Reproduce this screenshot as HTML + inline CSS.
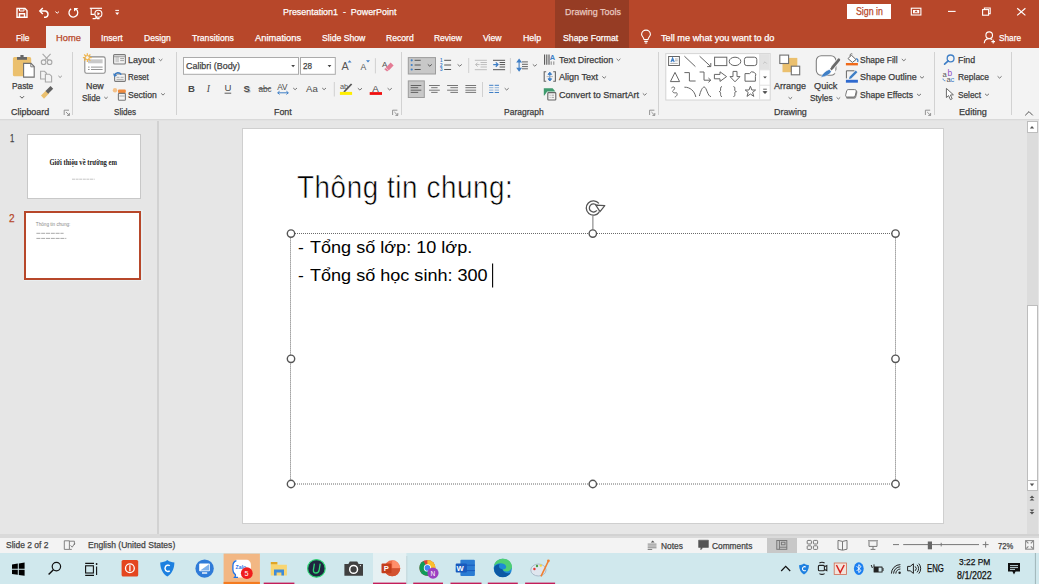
<!DOCTYPE html>
<html><head><meta charset="utf-8">
<style>
html,body{margin:0;padding:0;width:1039px;height:584px;overflow:hidden;background:#e6e6e6;font-family:"Liberation Sans",sans-serif;}
.a{position:absolute;}
.t{position:absolute;white-space:pre;line-height:1;transform-origin:0 0;font-family:"Liberation Sans",sans-serif;-webkit-text-stroke:0.25px currentColor;}
svg{position:absolute;overflow:visible;}
</style></head><body>
<!-- title bar + tabs -->
<div class="a" style="left:0;top:0;width:1039px;height:48px;background:#b7472a"></div>
<div class="a" style="left:555px;top:0;width:74px;height:48px;background:#963c24"></div>
<div class="a" style="left:46px;top:26px;width:44px;height:22px;background:#f3f3f3"></div>
<div class="a" style="left:847px;top:4px;width:44px;height:15px;background:#fff"></div>
<!-- ribbon -->
<div class="a" style="left:0;top:48px;width:1039px;height:70.6px;background:#f3f3f3"></div>
<div class="a" style="left:0;top:118.6px;width:1039px;height:1px;background:#d9d9d9"></div>
<div class="a" style="left:0;top:119.6px;width:1039px;height:1px;background:#e2e2e2"></div>
<!-- group separators -->
<div class="a" style="left:72px;top:52px;width:1px;height:63px;background:#d2d2d2"></div>
<div class="a" style="left:176px;top:52px;width:1px;height:63px;background:#d2d2d2"></div>
<div class="a" style="left:401px;top:52px;width:1px;height:63px;background:#d2d2d2"></div>
<div class="a" style="left:658px;top:52px;width:1px;height:63px;background:#d2d2d2"></div>
<div class="a" style="left:934px;top:52px;width:1px;height:63px;background:#d2d2d2"></div>
<div class="a" style="left:1011px;top:52px;width:1px;height:63px;background:#d2d2d2"></div>
<!-- workspace -->
<div class="a" style="left:157.3px;top:121px;width:1.8px;height:415px;background:#d2d2d2"></div>
<!-- thumbnails -->
<div class="a" style="left:26.5px;top:134px;width:112px;height:63px;background:#fff;border:1px solid #c8c8c8"></div>
<div class="a" style="left:23.6px;top:210.4px;width:119px;height:71px;background:#e9eef0"></div>
<div class="a" style="left:24.4px;top:211.3px;width:112.6px;height:64.3px;background:#fff;border:2.5px solid #b7472a"></div>
<!-- slide -->
<div class="a" style="left:242px;top:128px;width:700px;height:394px;background:#fff;border:1px solid #cfcfcf"></div>
<!-- scrollbar -->
<div class="a" style="left:1027px;top:121px;width:11px;height:415px;background:#dcdcdc"></div>
<div class="a" style="left:1027px;top:121px;width:9px;height:10px;background:#fff;border:1px solid #bdbdbd"></div>
<div class="a" style="left:1027px;top:305px;width:9px;height:174px;background:#fff;border:1px solid #bdbdbd"></div>
<div class="a" style="left:1027px;top:480px;width:9px;height:9px;background:#fff;border:1px solid #bdbdbd"></div>
<!-- status bar -->
<div class="a" style="left:0;top:534.4px;width:1039px;height:3.4px;background:#dadada"></div>
<div class="a" style="left:160px;top:534.2px;width:879px;height:1.8px;background:#d2d2d2"></div>
<div class="a" style="left:0;top:537.8px;width:1039px;height:15.6px;background:#f3f3f3"></div>
<div class="a" style="left:767px;top:538px;width:30px;height:15.4px;background:#c8c8c8"></div>
<!-- taskbar -->
<div class="a" style="left:0;top:553.4px;width:1039px;height:31px;background:#d0e8ed"></div>
<svg class="a" style="left:0;top:0" width="1039" height="584" viewBox="0 0 1039 584">
<!-- QAT -->
<g fill="none" stroke="#fff" stroke-width="1.4">
 <path d="M17,8.5 H25 L27,10.5 V17.3 H17 Z"/>
 <path d="M19.5,17.3 V13.8 H24.5 V17.3"/>
 <path d="M19.5,8.5 V11 H24 V8.5" stroke-width="1"/>
 <path d="M40,11 H45.5 A3.6,3.3 0 0 1 45.5,17.3 H44"/>
 <path d="M42.8,8.1 L39.8,11 L42.8,13.9"/>
 <path d="M55.4,11.6 L57.2,13.2 L59,11.6" stroke-width="1"/>
 <path d="M71.15,8.84 A4.4,4.4 0 1 0 76.2,9.28" stroke-width="1.3"/>
 <path d="M89.8,8.3 H102" stroke-width="1.2"/>
 <path d="M91.2,8.6 V14.4 H94.6" stroke-width="1.1"/>
 <circle cx="98.4" cy="13.7" r="3.5" stroke-width="1.1"/>
 <path d="M92.6,18.6 H95.2 L96.2,17.4 L97.2,18.6 H99.6" stroke-width="1.1"/>
 <path d="M115.3,10.4 H119" stroke-width="1"/>
</g>
<path d="M115.2,12.6 H119.2 L117.2,15 Z" fill="#fff"/>
<path d="M97.4,11.9 L100.2,13.7 L97.4,15.5 Z" fill="#fff"/>
<path d="M74,7.9 L78.5,7.9 L74,11.5 Z" fill="#fff"/>

<!-- window controls -->
<g fill="none" stroke="#fff" stroke-width="1.1">
 <rect x="911.3" y="8.2" width="9.6" height="6.8"/>
 <path d="M948,11.4 H955.6"/>
 <rect x="982.6" y="9.6" width="6" height="5.6"/>
 <path d="M984.4,9.6 V8 H990.2 V13.6 H988.6"/>
 <path d="M1017.2,8.2 L1025.4,15.4 M1025.4,8.2 L1017.2,15.4" stroke-width="1.2"/>
</g>
<path d="M913,10 H919.2 V13.3 H913 Z" fill="#fff"/>
<path d="M916.1,10.3 L914.4,12.2 H917.8 Z" fill="#b7472a"/>
<!-- lightbulb, share -->
<g fill="none" stroke="#fff" stroke-width="1.1">
 <path d="M644,39.5 C643.6,37 641.6,36 641.6,34.5 A4.4,4.4 0 0 1 650.4,34.5 C650.4,36 648.4,37 648,39.5 Z"/>
 <path d="M644.2,41.4 H647.8 M644.8,43 H647.2"/>
 <circle cx="989.2" cy="35.2" r="3.3"/>
 <path d="M984.2,43.2 C984.6,40 986.6,38.6 989.2,38.6 C990.4,38.6 991.4,38.9 992.2,39.5"/>
 <path d="M991.4,41.6 H995 M993.2,39.8 V43.4"/>
</g>
<!-- Clipboard group -->
<rect x="12.9" y="57.1" width="18.3" height="19.2" rx="1.6" fill="#ebc06e"/>
<path d="M17,57 H27 V59.8 H17 Z" fill="#666"/>
<path d="M20.4,55 H23.6 V57.5 H20.4 Z" fill="#666"/>
<path d="M23.6,63.4 H31 L34.2,66.6 V77.1 H23.6 Z" fill="#fff" stroke="#707070" stroke-width="1.1"/>
<path d="M30.8,63.4 V66.8 H34.2" fill="none" stroke="#707070" stroke-width="0.9"/>
<g fill="none" stroke="#a8a8a8" stroke-width="1.1">
 <circle cx="43.6" cy="62.2" r="2.3"/><circle cx="49.6" cy="62.2" r="2.3"/>
 <path d="M44.8,60.2 L50.6,53.8 M48.4,60.2 L42.6,53.8"/>
 <path d="M40.6,71.3 H44.5 L46.5,73.3 V79 H40.6 Z"/>
 <path d="M45.4,74.2 H49.5 L51.6,76.2 V82 H45.4 Z" fill="#f3f3f3"/>
 <path d="M58.4,75.9 L60.1,77.5 L61.8,75.9" stroke="#888" stroke-width="0.9"/>
</g>
<path d="M41,95.5 L46,90.5 L49,93.5 L44,98.8 Z" fill="#ebc06e"/>
<path d="M45.5,91 L50.5,86 L53.2,88.7 L48.2,93.7 Z" fill="#606060"/>
<path d="M20,96.2 L22,98.2 L24,96.2" fill="none" stroke="#555" stroke-width="1"/>
<!-- Slides group -->
<rect x="84.8" y="56.9" width="20.4" height="16.4" rx="1.8" fill="#fff" stroke="#8a8a8a" stroke-width="1.1"/>
<rect x="88" y="59.3" width="14.6" height="4" fill="#c9c9c9"/>
<path d="M88,67.1 H89.6 M91,67.1 H102.6 M88,69.5 H89.6 M91,69.5 H102.6" stroke="#888" stroke-width="0.9"/>
<g stroke="#f0b44a" stroke-width="1.2">
 <path d="M87.3,53.2 V62 M82.9,57.6 H91.7 M84.2,54.5 L90.4,60.7 M90.4,54.5 L84.2,60.7"/>
</g>
<circle cx="87.3" cy="57.6" r="2" fill="#f3f3f3" stroke="#f0b44a" stroke-width="1"/>
<path d="M104.3,97 L106,98.6 L107.7,97" fill="none" stroke="#666" stroke-width="0.9"/>
<rect x="113.6" y="54.6" width="11.8" height="9.4" rx="1" fill="#f3f3f3" stroke="#7a7a7a" stroke-width="1.1"/>
<rect x="115.4" y="56.6" width="3.6" height="5.6" fill="#cfcfcf"/>
<path d="M113.6,56.7 H125.4 M120.2,58.6 H124 M120.2,60.6 H124" stroke="#8a8a8a" stroke-width="0.8"/>
<rect x="114.6" y="74" width="10.8" height="7.4" rx="0.8" fill="#f3f3f3" stroke="#7a7a7a" stroke-width="1.1"/>
<path d="M116.5,77.3 H119.5 M120.5,77.3 H123.6 M116.5,79.4 H123.6" stroke="#999" stroke-width="0.8"/>
<path d="M114.4,75.5 C115.5,72.2 119.5,71.8 121.2,74.6" fill="none" stroke="#3b7cc4" stroke-width="1.4"/>
<path d="M113,73.2 L114.2,77 L117.2,75.4 Z" fill="#3b7cc4"/>
<circle cx="115" cy="90.2" r="2.2" fill="#f4c28a"/>
<rect x="118" y="89.6" width="7.8" height="3.4" rx="1" fill="#f08a3c"/>
<rect x="118.4" y="93.4" width="7" height="6.8" rx="0.8" fill="#f3f3f3" stroke="#7a7a7a" stroke-width="1.1"/>
<path d="M119.4,96 H124.6" stroke="#999" stroke-width="0.8"/>
<path d="M158.8,59 L160.6,60.7 L162.4,59 M161.2,93.4 L163,95.1 L164.8,93.4" fill="none" stroke="#666" stroke-width="0.9"/>
<!-- dialog launchers -->
<g fill="none" stroke="#8a8a8a" stroke-width="0.9">
 <path d="M64.2,115 V110.2 H69 M66,112 L69.4,115.4 M69.4,113 V115.4 H67"/>
 <path d="M392.6,115 V110.2 H397.4 M394.4,112 L397.8,115.4 M397.8,113 V115.4 H395.4"/>
 <path d="M649.6,115 V110.2 H654.4 M651.4,112 L654.8,115.4 M654.8,113 V115.4 H652.4"/>
 <path d="M925.4,115 V110.2 H930.2 M927.2,112 L930.6,115.4 M930.6,113 V115.4 H928.2"/>
</g>
</svg>

<svg class="a" style="left:0;top:0" width="1039" height="584" viewBox="0 0 1039 584">
<!-- Font group -->
<rect x="183.5" y="57.5" width="115" height="16.8" fill="#fff" stroke="#ababab" stroke-width="1"/>
<rect x="300.5" y="57.5" width="34.8" height="16.8" fill="#fff" stroke="#ababab" stroke-width="1"/>
<path d="M291.2,65 H295 L293.1,67.2 Z M327.6,65 H331.4 L329.5,67.2 Z" fill="#444"/>
<g font-family="Liberation Sans" fill="#555">
 <text x="341.4" y="69.8" font-size="10.8">A</text>
 <text x="360.6" y="69.8" font-size="8.6">A</text>
</g>
<path d="M347.6,62.4 L349.6,60.2 L351.6,62.4 Z" fill="#3f7fc6"/>
<path d="M366,60.2 H370 L368,62.4 Z" fill="#3f7fc6"/>
<path d="M375.4,58.2 V73.4" stroke="#d0d0d0" stroke-width="1"/>
<text x="382" y="66.6" font-family="Liberation Sans" font-size="8" fill="#555">A</text>
<path d="M385.8,67.8 L390.6,62.6 L393.6,65.4 L388.8,70.6 Z" fill="#e47b94"/>
<path d="M384,69.2 L385.8,67.8 L388.8,70.6 L387,71.6 Z" fill="#e47b94" stroke="#f3f3f3" stroke-width="0.4"/>
<g font-family="Liberation Sans" fill="#4a4a4a">
 <text x="188" y="92" font-size="9.6" font-weight="bold">B</text>
 <text x="206.8" y="92" font-size="9.6" font-style="italic" font-family="Liberation Serif">I</text>
 <text x="224.4" y="91.2" font-size="9.6">U</text>
 <text x="244.4" y="92.6" font-size="9.6" fill="#bbb" font-weight="bold">S</text>
 <text x="243.4" y="91.8" font-size="9.6" font-weight="bold">S</text>
 <text x="258.4" y="91.6" font-size="8.2">abc</text>
 <text x="277.2" y="90" font-size="8.2">AV</text>
 <text x="306" y="91.8" font-size="9.6">Aa</text>
</g>
<path d="M224.6,93.2 H231.2" stroke="#4a4a4a" stroke-width="0.9"/>
<path d="M258.4,88.6 H270.8" stroke="#4a4a4a" stroke-width="0.8"/>
<path d="M278,92.8 H288 M279.6,91.2 L277.6,92.8 L279.6,94.4 M286.4,91.2 L288.4,92.8 L286.4,94.4" fill="none" stroke="#3f7fc6" stroke-width="1"/>
<g fill="none" stroke="#666" stroke-width="0.9">
 <path d="M293.2,88 L295.1,89.7 L297,88"/>
 <path d="M322.2,88 L324.1,89.7 L326,88"/>
 <path d="M357.8,88.2 L359.9,90 L362,88.2"/>
 <path d="M387.6,88.2 L389.7,90 L391.8,88.2"/>
</g>
<path d="M334.3,82 V96.5" stroke="#d0d0d0" stroke-width="1"/>
<text x="340" y="89.4" font-family="Liberation Sans" font-size="7.4" fill="#555">ab</text>
<path d="M344,92 L351.6,84" stroke="#555" stroke-width="1.8"/>
<rect x="339.9" y="91.9" width="12.2" height="3" fill="#ffee00"/>
<text x="372.2" y="91.6" font-family="Liberation Sans" font-size="9.8" fill="#4a4a4a">A</text>
<rect x="369.7" y="92.1" width="12.3" height="2.8" fill="#f01010"/>
<!-- Paragraph group -->
<rect x="408.3" y="57.6" width="27.2" height="16.4" fill="#c8c8c8" stroke="#9c9c9c" stroke-width="1"/>
<g fill="#3f7fc6"><circle cx="411.7" cy="60.3" r="1.1"/><circle cx="411.7" cy="65" r="1.1"/><circle cx="411.7" cy="69.5" r="1.1"/></g>
<path d="M414.6,60.3 H420.7 M414.6,65 H420.7 M414.6,69.5 H420.7" stroke="#555" stroke-width="1"/>
<path d="M427.8,64.4 L429.8,66.2 L431.8,64.4" fill="none" stroke="#555" stroke-width="1"/>
<g font-family="Liberation Sans" font-size="4.6" fill="#3f7fc6" font-weight="bold">
 <text x="440" y="62">1</text><text x="440" y="66.8">2</text><text x="440" y="71.4">3</text>
</g>
<path d="M444.2,60.3 H451.1 M444.2,65 H451.1 M444.2,69.5 H451.1" stroke="#555" stroke-width="1"/>
<path d="M457.6,64.4 L459.7,66.2 L461.8,64.4" fill="none" stroke="#666" stroke-width="0.9"/>
<path d="M468.7,58 V73" stroke="#d0d0d0" stroke-width="1"/>
<g stroke="#bdbdbd" stroke-width="1" fill="none">
 <path d="M474.8,60.3 H486.9 M474.8,69.7 H486.9 M480.5,62.5 H486.9 M480.5,64.6 H486.9 M480.5,67 H486.9"/>
 <path d="M475.6,64.6 H479.6 M477.6,62.6 L475.6,64.6 L477.6,66.6"/>
</g>
<g stroke="#555" stroke-width="1" fill="none">
 <path d="M493,60.3 H505.1 M493,69.7 H505.1 M499.6,62.5 H505.1 M499.6,64.6 H505.1 M499.6,67 H505.1"/>
</g>
<path d="M493.2,64.6 H497.6 M495.8,62.4 L498,64.6 L495.8,66.8" stroke="#3f7fc6" stroke-width="1.3" fill="none"/>
<path d="M510.4,58 V73.5" stroke="#d0d0d0" stroke-width="1"/>
<path d="M519.1,60.2 V70 M517.2,62 L519.1,59.4 L521,62 Z M517.2,68.2 L519.1,70.8 L521,68.2 Z" stroke="#3f7fc6" stroke-width="1.1" fill="#3f7fc6"/>
<path d="M522,61.9 H527.9 M522,64.3 H527.9 M522,66.6 H527.9 M522,68.8 H527.9" stroke="#555" stroke-width="0.9"/>
<path d="M532.8,64.4 L534.8,66.2 L536.8,64.4" fill="none" stroke="#666" stroke-width="0.9"/>
<rect x="408.3" y="80.9" width="16" height="16.6" fill="#c8c8c8" stroke="#9c9c9c" stroke-width="1"/>
<path d="M410.7,85.5 H421.3 M410.7,87.7 H418.2 M410.7,90.2 H421.3 M410.7,92.4 H418.2" stroke="#555" stroke-width="0.9"/>
<path d="M429,85.5 H439.8 M431.2,87.7 H437.6 M429,90.2 H439.8 M431.2,92.4 H437.6" stroke="#666" stroke-width="0.9"/>
<path d="M447.1,85.5 H458 M450.4,87.7 H458 M447.1,90.2 H458 M450.4,92.4 H458" stroke="#666" stroke-width="0.9"/>
<path d="M465.4,85.5 H476.1 M465.4,87.7 H476.1 M465.4,90.2 H476.1 M465.4,92.4 H476.1" stroke="#666" stroke-width="0.9"/>
<path d="M482.5,82 V97" stroke="#d0d0d0" stroke-width="1"/>
<path d="M489.1,85.3 H493.4 M494.7,85.3 H499 M489.1,92.5 H493.4 M494.7,92.5 H499" stroke="#3f7fc6" stroke-width="1"/>
<path d="M489.1,87.7 H493.4 M494.7,87.7 H499 M489.1,90.1 H493.4 M494.7,90.1 H499" stroke="#8fb3da" stroke-width="1"/>
<path d="M504.7,88.2 L506.7,90 L508.7,88.2" fill="none" stroke="#666" stroke-width="0.9"/>
<!-- Text direction -->
<path d="M544.6,54.5 V64.8 M546.8,54.5 V64.8 M549,54.5 V64.8" stroke="#555" stroke-width="1.1"/>
<path d="M551.2,61.4 V64.8 M553.8,61.4 V64.8" stroke="#888" stroke-width="1"/>
<text x="549.8" y="60" font-family="Liberation Sans" font-size="7.4" font-weight="bold" fill="#3f7fc6">A</text>
<path d="M616.6,58.8 L618.5,60.6 L620.4,58.8" fill="none" stroke="#666" stroke-width="0.9"/>
<!-- Align text -->
<path d="M546.2,71.8 H544.2 V81.3 H546.2 M553.2,71.8 H555.4 V81.3 H553.2" fill="none" stroke="#666" stroke-width="1.1"/>
<path d="M549.8,72.6 V80.6 M548,74.4 L549.8,72.2 L551.6,74.4 Z M548,78.8 L549.8,81 L551.6,78.8 Z" stroke="#3f7fc6" stroke-width="1" fill="#3f7fc6"/>
<path d="M546.6,76.6 H553" stroke="#aaa" stroke-width="0.8"/>
<path d="M602.3,76.4 L604.2,78.2 L606.1,76.4" fill="none" stroke="#666" stroke-width="0.9"/>
<!-- SmartArt -->
<path d="M543.8,88.2 H552.6 L555.4,91.6 H547.2 L544.4,95.6 H543.8 Z" fill="#3f9b6e"/>
<rect x="547.8" y="92.6" width="8" height="7.4" rx="0.8" fill="#f3f3f3" stroke="#666" stroke-width="1.1"/>
<path d="M549.6,95.2 H550.6 M551.6,95.2 H554 M549.6,97.4 H550.6 M551.6,97.4 H554" stroke="#888" stroke-width="0.7"/>
<path d="M642.8,93.4 L644.7,95.2 L646.6,93.4" fill="none" stroke="#666" stroke-width="0.9"/>
</svg>

<svg class="a" style="left:0;top:0" width="1039" height="584" viewBox="0 0 1039 584">
<!-- shapes gallery -->
<rect x="665.8" y="53.6" width="104.4" height="46.4" fill="#fff" stroke="#d4d4d4" stroke-width="1"/>
<rect x="759.8" y="54.1" width="9.9" height="15.4" fill="#e2e2e2"/>
<path d="M759.6,54 V99.5 M759.6,69.8 H770 M759.6,85.2 H770" stroke="#e0e0e0" stroke-width="1"/>
<path d="M763.2,63.6 L765,61.8 L766.8,63.6" fill="none" stroke="#c0c0c0" stroke-width="0.9"/>
<path d="M763.2,76.6 H766.8 L765,78.6 Z" fill="#444"/>
<path d="M763.2,89.2 H766.8 M763.2,91.6 H766.8 L765,93.6 Z" stroke="#444" stroke-width="0.8" fill="#444"/>
<g fill="none" stroke="#666" stroke-width="1">
 <rect x="668.6" y="56.5" width="10.8" height="9"/>
 <path d="M670.2,63.4 H677.8 M675,59 H677.8 M675,60.8 H677.8" stroke="#999" stroke-width="0.8"/>
 <path d="M684.4,56.2 L695.4,66.6"/>
 <path d="M699.6,56.2 L710.6,66.4 M707.2,66.6 H710.8 V63"/>
 <rect x="714.6" y="57.2" width="12.2" height="8.4"/>
 <ellipse cx="735" cy="61.4" rx="5.8" ry="4.2"/>
 <rect x="744.4" y="57.2" width="12.4" height="8.4" rx="2.4"/>
 <path d="M675,72.4 L679.6,81.6 H670.4 Z"/>
 <path d="M684.4,72.6 H689.4 V81 H695.6"/>
 <path d="M699.6,72 H704 V80.2 H710.6 M708.4,78 L710.8,80.2 L708.4,82.4"/>
 <path d="M714.4,74.4 H720 V71.8 L726.6,76.6 L720,81.4 V78.8 H714.4 Z"/>
 <path d="M733,71.4 H737 V76.6 H740 L735,81.8 L730,76.6 H733 Z"/>
 <path d="M745,73.6 H749.6 A3,3 0 0 1 755.4,76.6 V81.2 H745 Z"/>
 <path d="M671.4,88 C674,85.6 676,88 673.6,90 C671,92 674.4,93.6 676.4,92.6 C678,94 676.8,96.4 674.8,97"/>
 <path d="M684.4,87.2 C690,87 694.6,91 695.8,97"/>
 <path d="M699.4,96 C700.6,91 702.4,87 704.2,87 C706.6,87 707.6,96.6 711,96.6"/>
 <path d="M722,86.6 C720.2,86.6 720.6,88.6 720.6,90 C720.6,91.2 719.8,91.6 719,91.6 C719.8,91.6 720.6,92 720.6,93.2 C720.6,94.6 720.2,96.6 722,96.6"/>
 <path d="M733.4,86.6 C735.2,86.6 734.8,88.6 734.8,90 C734.8,91.2 735.6,91.6 736.4,91.6 C735.6,91.6 734.8,92 734.8,93.2 C734.8,94.6 735.2,96.6 733.4,96.6"/>
 <path d="M750.4,86.2 L751.8,90 H755.6 L752.6,92.4 L753.8,96.4 L750.4,94 L747,96.4 L748.2,92.4 L745.2,90 H749 Z"/>
</g>
<path d="M671,62 L672.6,58 L674.2,62 M671.6,60.6 H673.6" fill="none" stroke="#3f7fc6" stroke-width="1.2"/>
<!-- Arrange -->
<rect x="782.5" y="57.9" width="14.8" height="14.3" fill="#ebc06e"/>
<rect x="779.8" y="55.1" width="8.8" height="8.4" fill="#fff" stroke="#707070" stroke-width="1.1"/>
<rect x="791.3" y="66.2" width="8.4" height="8.6" fill="#fff" stroke="#707070" stroke-width="1.1"/>
<path d="M788.5,97.2 L790.3,98.8 L792.1,97.2" fill="none" stroke="#666" stroke-width="0.9"/>
<!-- Quick styles -->
<rect x="816.3" y="55.7" width="19.6" height="19.6" rx="5" fill="#fff" stroke="#808080" stroke-width="1.1"/>
<path d="M833.5,73 L837,69.5 L838,74 Z" fill="#f3f3f3"/>
<path d="M839,59.6 L832.4,67.6" stroke="#f3f3f3" stroke-width="4.6"/>
<path d="M838.8,59.8 L832.6,67.4" stroke="#6a6a6a" stroke-width="2.8" stroke-linecap="round"/>
<path d="M831.8,67 L833.4,68.6 L831.6,70.4 L830,68.8 Z" fill="#6a6a6a"/>
<path d="M829.4,69.4 L831.2,71.4 C830,74 827,76.4 820.8,77.2 C822.6,73.6 825.6,70.6 829.4,69.4 Z" fill="#3f7fc6" stroke="#f3f3f3" stroke-width="0.5"/>
<path d="M836.6,97.4 L838.4,99 L840.2,97.4" fill="none" stroke="#666" stroke-width="0.9"/>
<!-- Shape fill / outline / effects -->
<path d="M848,58.6 L851.4,55.2 L856,59.6 L852.4,62.4 Z" fill="#fff" stroke="#666" stroke-width="1"/>
<path d="M850.2,56.4 C849.6,54.4 851,53 852.4,54" fill="none" stroke="#666" stroke-width="0.9"/>
<path d="M856,59 C857.6,58.6 858.4,60.6 857.6,62" fill="none" stroke="#3f7fc6" stroke-width="1.3"/>
<rect x="845.9" y="63" width="12" height="2.4" fill="#f06a1a"/>
<path d="M846.4,78.4 V70.8 H854.4" fill="none" stroke="#666" stroke-width="1"/>
<path d="M849.6,76.8 L855.8,70.6 L857.4,72.2 L851.2,78.4 L849,79 Z" fill="#3f7fc6"/>
<rect x="845.9" y="79.8" width="12" height="2.9" fill="#2f6acf"/>
<path d="M848.6,90.2 H855.4 C857.2,90.2 857.6,91.4 857.2,93.2 L856.4,96.4 C856,98 855,98.8 853.4,98.8 H848 C846.4,98.8 845.8,97.8 846.2,96.2 L847,92.6 C847.4,91 847.8,90.2 848.6,90.2 Z" fill="#8c8c8c"/>
<path d="M848.2,89.6 H854.6 C856,89.6 856.4,90.6 856.1,92 L855.4,95 C855.1,96.4 854.2,97 852.8,97 H847.2 C845.9,97 845.4,96.2 845.7,94.8 L846.4,92 C846.7,90.4 847.2,89.6 848.2,89.6 Z" fill="#fff" stroke="#6a6a6a" stroke-width="0.9"/>
<g fill="none" stroke="#666" stroke-width="0.9">
 <path d="M901.8,59 L903.8,60.8 L905.8,59"/>
 <path d="M920,76.4 L922,78.2 L924,76.4"/>
 <path d="M917,93.9 L919,95.7 L921,93.9"/>
 <path d="M997.6,76.3 L999.6,78.1 L1001.6,76.3"/>
 <path d="M985,93.8 L987,95.6 L989,93.8"/>
 <path d="M1025.2,115.4 L1029,111.6 L1032.8,115.4" stroke="#555" stroke-width="1"/>
</g>
<!-- Editing -->
<circle cx="950.6" cy="58.4" r="3.4" fill="none" stroke="#3f7fc6" stroke-width="1.3"/>
<path d="M948.2,60.9 L944.6,64.2" stroke="#3f7fc6" stroke-width="1.7" stroke-linecap="round"/>
<text x="942.6" y="76.6" font-family="Liberation Sans" font-size="7.6" fill="#555">a</text>
<text x="947.4" y="76.4" font-family="Liberation Sans" font-size="8.4" fill="#8e4fc4">b</text>
<text x="946.4" y="82" font-family="Liberation Sans" font-size="7.6" fill="#555">a</text>
<text x="950.6" y="82" font-family="Liberation Sans" font-size="7.6" fill="#3f7fc6">c</text>
<path d="M943,78.6 C943.2,80 943.8,80.6 945.4,80.8" fill="none" stroke="#3f7fc6" stroke-width="0.9"/>
<path d="M946.4,88.4 V97.6 L948.6,95.6 L950.4,99.6 L952.2,98.8 L950.4,95 L953.4,94.8 Z" fill="#fff" stroke="#6a6a6a" stroke-width="1" stroke-linejoin="round"/>
</svg>

<svg class="a" style="left:0;top:0" width="1039" height="584" viewBox="0 0 1039 584">
<!-- text box selection -->
<g fill="none" stroke="#6a6a6a" stroke-width="1" stroke-dasharray="1 1">
 <path d="M291,233.5 H895.5 M291,484 H895.5"/>
 <path d="M290.5,233.6 V484 M895.5,233.6 V484"/>
</g>
<path d="M592.9,215.6 V229.6" stroke="#777" stroke-width="1"/>
<g fill="#fff" stroke="#555" stroke-width="1.4">
 <circle cx="291" cy="233.6" r="3.7"/>
 <circle cx="592.8" cy="233.6" r="3.7"/>
 <circle cx="895.5" cy="233.6" r="3.7"/>
 <circle cx="291" cy="358.8" r="3.7"/>
 <circle cx="895.5" cy="358.8" r="3.7"/>
 <circle cx="291" cy="484" r="3.7"/>
 <circle cx="592.8" cy="484" r="3.7"/>
 <circle cx="895.5" cy="484" r="3.7"/>
</g>
<!-- rotation handle -->
<path d="M598,211.2 A5.6,5.6 0 1 1 597.7,204.4" fill="none" stroke="#555" stroke-width="4.4"/>
<path d="M598,211.2 A5.6,5.6 0 1 1 597.7,204.4" fill="none" stroke="#fff" stroke-width="1.8"/>
<path d="M595.8,205.2 L604.8,205.6 L600,211.6 Z" fill="#fff" stroke="#555" stroke-width="1.2" stroke-linejoin="round"/>
<!-- text cursor -->
<path d="M492.6,263.6 V287.6" stroke="#000" stroke-width="1.1"/>
</svg>

<svg class="a" style="left:0;top:0" width="1039" height="584" viewBox="0 0 1039 584">
<!-- thumbnails content -->
<text x="49.4" y="165.2" font-family="Liberation Serif" font-size="8" font-weight="bold" fill="#222" textLength="67.5" lengthAdjust="spacingAndGlyphs">Giới thiệu về trường em</text>
<path d="M72,179.2 H94.7" stroke="#c4c4c4" stroke-width="1" stroke-dasharray="3 0.6"/>
<text x="35.8" y="225.6" font-family="Liberation Sans" font-size="5.6" fill="#888" textLength="34.6" lengthAdjust="spacingAndGlyphs">Thông tin chung:</text>
<path d="M36.4,233.3 H63.6 M36.4,238.4 H66.3" stroke="#a8a8a8" stroke-width="1" stroke-dasharray="4 0.8"/>
<!-- status bar icons -->
<path d="M64.3,540.8 H69.4 V549.4 H64.3 Z" fill="none" stroke="#777" stroke-width="0.9"/>
<path d="M69.4,541.2 H74.4 V545 M69.4,549.4 H71.8" fill="none" stroke="#777" stroke-width="0.9"/>
<path d="M70.6,545.4 L72.2,547.2 L75,543" fill="none" stroke="#777" stroke-width="0.9"/>
<path d="M650.8,542.6 L652.7,540.6 L654.6,542.6 Z" fill="#555"/>
<path d="M647.7,544.1 H656.5 M647.7,546 H656.5 M647.7,547.8 H656.5 M647.7,549.5 H652.2" stroke="#777" stroke-width="0.9"/>
<path d="M698.6,540.2 H708.4 V547.4 H702.8 L700.8,549.8 V547.4 H698.6 Z" fill="#555" stroke="#555" stroke-width="0.6" stroke-linejoin="round"/>
<g fill="none" stroke="#777" stroke-width="1">
 <rect x="776.8" y="540.5" width="10" height="8.8"/>
 <path d="M779.4,540.5 V549.3 M779.4,547.2 H786.8"/>
 <rect x="781.4" y="542.2" width="3.6" height="2.6"/>
 <rect x="807.2" y="540.4" width="4.2" height="3.6" rx="0.8"/>
 <rect x="813.4" y="540.4" width="4.2" height="3.6" rx="0.8"/>
 <rect x="807.2" y="545.8" width="4.2" height="3.6" rx="0.8"/>
 <rect x="813.4" y="545.8" width="4.2" height="3.6" rx="0.8"/>
 <path d="M842.5,541.4 L838,540.4 V549.2 L842.5,550.2 L847,549.2 V540.4 Z M842.5,541.4 V550"/>
 <path d="M868,540.8 H878 M869,541.4 V546.4 H877 V541.4 M873,546.4 V549 M870.6,549.4 H875.4"/>
 <path d="M893,544.6 H899"/>
 <path d="M903.2,544.6 H979 M941.2,542.8 V546.4 M982.7,544.6 H988.6 M985.65,541.6 V547.6"/>
</g>
<rect x="927.8" y="541.5" width="4.2" height="7.8" fill="#666"/>
<g fill="none" stroke="#888" stroke-width="1">
 <rect x="1025.6" y="540.6" width="8" height="8.6"/>
</g>
<path d="M1026.2,541.2 L1028.4,543.4 M1033,541.2 L1030.8,543.4 M1026.2,548.6 L1028.4,546.4 M1033,548.6 L1030.8,546.4" stroke="#888" stroke-width="1.2"/>
<!-- scrollbar glyphs -->
<path d="M1029.8,128.6 L1032,126 L1034.2,128.6 Z" fill="#555"/>
<path d="M1029.8,483.6 H1034.2 L1032,486.2 Z" fill="#555"/>
<path d="M1029.6,498 L1032,495.6 L1034.4,498 Z M1029.6,500.6 L1032,498.2 L1034.4,500.6 Z" fill="#555"/>
<path d="M1029.6,509.4 H1034.4 L1032,511.8 Z M1029.6,512 H1034.4 L1032,514.4 Z" fill="#555"/>
</svg>

<svg class="a" style="left:0;top:0" width="1039" height="584" viewBox="0 0 1039 584">
<!-- start, search, task view -->
<path d="M12,564.4 L17.8,563.6 V568.7 H12 Z M18.8,563.4 L24.6,562.6 V568.7 H18.8 Z M12,569.7 H17.8 V574.8 L12,574 Z M18.8,569.7 H24.6 V575.8 L18.8,575 Z" fill="#000"/>
<circle cx="56.4" cy="566.6" r="4.2" fill="none" stroke="#111" stroke-width="1.2"/>
<path d="M53.4,569.8 L48.6,574.6" stroke="#111" stroke-width="1.4"/>
<g fill="none" stroke="#111" stroke-width="1.1">
 <path d="M85.2,563.4 H94 M85.2,575.4 H94"/>
 <rect x="85.6" y="565.8" width="7.8" height="7.2"/>
 <path d="M96.6,566.6 V575"/>
</g>
<circle cx="96.6" cy="564" r="0.9" fill="#111"/>
<!-- red power -->
<rect x="121.6" y="560" width="16.6" height="16.6" rx="1.6" fill="#e4461f"/>
<circle cx="129.9" cy="568.3" r="4.4" fill="none" stroke="#fff" stroke-width="1.3"/>
<path d="M129.9,565.2 V571.2" stroke="#fff" stroke-width="1.3"/>
<!-- shield -->
<path d="M167.3,560 C165,561.8 162.6,562.4 160.2,562.4 C160.4,569 163,574 167.3,576.6 C171.6,574 174.2,569 174.4,562.4 C172,562.4 169.6,561.8 167.3,560 Z" fill="#1d80e0"/>
<path d="M169.6,566 C169,564.6 165.2,564.6 165,568.4 C165.2,572 169,572 169.6,570.6" fill="none" stroke="#fff" stroke-width="1.4"/>
<!-- blue circle app -->
<circle cx="204.6" cy="568.6" r="9.2" fill="#2f7bd8"/>
<rect x="199.2" y="563.6" width="10.6" height="7.6" rx="0.8" fill="#fff"/>
<path d="M200.2,570.6 L209,564.2 V570.6 Z" fill="#7fb2ec"/>
<path d="M202,573 H207.2" stroke="#fff" stroke-width="1.4"/>
<!-- zalo active -->
<rect x="223.6" y="553.6" width="36.3" height="30.4" fill="#f2b784"/>
<rect x="223.6" y="581.9" width="36.3" height="2.1" fill="#f47b20"/>
<path d="M238,559.8 H246 C249,559.8 250.9,561.8 250.9,565 V571 C250.9,575 248.6,577.4 245,577.4 H234.6 C235.6,576.4 235.8,575.6 235.4,574.6 C233.8,573.6 232.9,572 232.9,570 V565 C232.9,561.8 234.8,559.8 238,559.8 Z" fill="#fff"/>
<path d="M236.4,560.6 C233.8,561.4 232.9,563.2 232.9,566 V570 C232.9,572 233.8,573.6 235.4,574.6 C235.8,575.6 235.6,576.4 234.6,577.4 H238" fill="none" stroke="#1f73e8" stroke-width="1.3"/>
<text x="235.6" y="568.6" font-family="Liberation Sans" font-size="5.2" font-weight="bold" fill="#1f73e8">Zalo</text>
<circle cx="246.8" cy="573.2" r="5.9" fill="#f01d1d"/>
<text x="244.6" y="575.9" font-family="Liberation Sans" font-size="7.2" fill="#fff">5</text>
<!-- explorer -->
<path d="M270.8,563.6 H276.6 L277.8,564.8 H286.9 V575.5 H270.8 Z" fill="#f8d571"/>
<rect x="270.8" y="562" width="6.6" height="2.2" fill="#e0a526"/>
<path d="M274,569.4 H284 V575.5 H281.4 V572.4 H276.6 V575.5 H274 Z" fill="#3e8bd8"/>
<rect x="263.7" y="582.6" width="30.7" height="1.4" fill="#c41e5a"/>
<!-- U app -->
<circle cx="316.4" cy="568.4" r="8.8" fill="#1f2540" stroke="#2ed573" stroke-width="1.2"/>
<path d="M314.4,563.6 L313.4,569.8 C313.2,572 314.2,573 316,573 C317.8,573 318.8,572 319.2,569.8 L320.2,563.6" fill="none" stroke="#2ed573" stroke-width="1.3"/>
<!-- camera -->
<path d="M344.4,564 H348.4 L349.8,561.6 H357.2 L358.6,564 H363 V575.8 H344.4 Z" fill="#404040"/>
<circle cx="353.6" cy="569.4" r="3.9" fill="#404040" stroke="#fff" stroke-width="1.5"/>
<circle cx="360.4" cy="565.6" r="0.6" fill="#fff"/>
<!-- powerpoint active -->
<rect x="373" y="553" width="33.4" height="31" fill="#e6f1f3"/>
<rect x="373" y="582.6" width="33.4" height="1.4" fill="#c41e5a"/>
<path d="M406.8,556 V584" stroke="#bcd2d6" stroke-width="0.8"/>
<circle cx="392.2" cy="568.3" r="8" fill="#ed6c47"/>
<path d="M392.2,560.3 A8,8 0 0 1 400.2,568.3 H392.2 Z" fill="#ff8f6b"/>
<path d="M384.2,568.3 A8,8 0 0 0 400.2,568.3 Z" fill="#d35230"/>
<rect x="381.5" y="563.6" width="10" height="9.7" rx="1" fill="#c43e1c"/>
<text x="383.8" y="571.4" font-family="Liberation Sans" font-size="7.6" font-weight="bold" fill="#fff">P</text>
<!-- chrome + N -->
<circle cx="427.4" cy="567.9" r="8" fill="#db4437"/>
<path d="M427.4,567.9 L434.3,571.9 A8,8 0 0 1 420.5,571.9 Z" fill="#0f9d58"/>
<path d="M427.4,567.9 L420.5,571.9 A8,8 0 0 1 419.4,567.9 A8,8 0 0 1 423.4,561 Z" fill="#0f9d58"/>
<path d="M427.4,567.9 L434.3,571.9 A8,8 0 0 0 435.4,567.9 A8,8 0 0 0 427.4,559.9 V567.9 Z" fill="#fbc02d"/>
<circle cx="427.4" cy="567.9" r="3.6" fill="#fff"/>
<circle cx="427.4" cy="567.9" r="2.8" fill="#4285f4"/>
<circle cx="433" cy="573.1" r="5.6" fill="#9b3fc1"/>
<text x="430.6" y="575.8" font-family="Liberation Sans" font-size="6.6" fill="#fff">N</text>
<rect x="413.2" y="582.6" width="29.8" height="1.4" fill="#c41e5a"/>
<!-- word -->
<rect x="460.4" y="559.7" width="14.5" height="16.4" rx="1" fill="#2b7cd3"/>
<path d="M460.4,565.2 H474.9 M460.4,570.6 H474.9" stroke="#185abd" stroke-width="1"/>
<rect x="455.7" y="563.4" width="11.2" height="9.2" rx="1" fill="#185abd"/>
<text x="456.6" y="571.2" font-family="Liberation Sans" font-size="7.6" font-weight="bold" fill="#fff">W</text>
<rect x="450.5" y="582.6" width="31" height="1.4" fill="#c41e5a"/>
<!-- edge -->
<circle cx="502.8" cy="567.9" r="9.2" fill="#1e8ad6"/>
<path d="M494,566 C495,560 500,558.7 503.4,558.7 C508.6,558.7 512,562.6 512,566.6 C512,569.6 509.6,571.4 506.6,571.4 C504.6,571.4 503,570.6 502.6,569.4 C505.6,569.4 506.6,567.6 506,566 C505,563.6 501.4,562.6 498.4,563.6 C496.4,564.2 494.8,565.4 494,566 Z" fill="#4fcf74"/>
<path d="M502.4,569.2 C503.6,572.6 507.4,574 511,572.6 C509.4,575.6 506.4,577.2 502.8,577.2 C497,577.2 494,572.6 494,568 C494.6,565.6 497,564 499.8,564.2 C498,566 499,568.6 502.4,569.2 Z" fill="#0c59a4"/>
<rect x="487.8" y="582.6" width="30" height="1.4" fill="#c41e5a"/>
<!-- paint -->
<ellipse cx="538.4" cy="570" rx="7.6" ry="6" fill="#dfe6ee" stroke="#9fb0c0" stroke-width="0.8"/>
<circle cx="534.4" cy="569" r="1.2" fill="#e53935"/>
<circle cx="537" cy="566" r="1.2" fill="#43a047"/>
<circle cx="540.8" cy="565.6" r="1.2" fill="#fdd835"/>
<path d="M541,576.4 L548.4,561" stroke="#f08030" stroke-width="1.6"/>
<circle cx="548.4" cy="560.8" r="1.4" fill="#f08030"/>
<rect x="525.1" y="582.6" width="30" height="1.4" fill="#c41e5a"/>
<!-- tray -->
<path d="M781.2,571 L785.7,566.4 L790.2,571" fill="none" stroke="#111" stroke-width="1.2"/>
<path d="M804,563.6 C802.4,564.8 800.6,565.2 799,565.2 C799.2,569.6 801,572.8 804,574.4 C807,572.8 808.8,569.6 809,565.2 C807.4,565.2 805.6,564.8 804,563.6 Z" fill="#1d80e0"/>
<path d="M805.6,567.2 C805,566.2 802.6,566.4 802.4,568.8 C802.6,571 805,571.2 805.6,570.2" fill="none" stroke="#fff" stroke-width="1.1"/>
<g fill="none" stroke="#222" stroke-width="1.1">
 <rect x="818.4" y="565.4" width="6" height="5.4" rx="1"/>
 <path d="M824.4,566.8 L826.8,565.6 V570.6 L824.4,569.4"/>
 <path d="M819.4,563 C821,562 823,562 824.6,563 M819.4,573.6 C821,574.6 823,574.6 824.6,573.6"/>
</g>
<rect x="834.2" y="563" width="12.2" height="11.4" fill="#f3e4dc" stroke="#d26a4e" stroke-width="0.8"/>
<path d="M836.4,565 L840.2,572.6 L844.2,565" fill="none" stroke="#d8231f" stroke-width="1.5"/>
<ellipse cx="858.8" cy="568.6" rx="4.9" ry="6.3" fill="#1b7ff0"/>
<path d="M856.6,566.2 L861,570.6 L858.8,572.6 V564.6 L861,566.6 L856.6,571" fill="none" stroke="#fff" stroke-width="0.9"/>
<g fill="#222">
 <rect x="873.6" y="566.4" width="9" height="6.2" rx="0.6"/>
</g>
<path d="M871.2,565 L872.4,568 M874,564.4 V567" stroke="#222" stroke-width="1"/>
<rect x="882.6" y="568" width="0.9" height="3" fill="#222"/>
<rect x="878.6" y="567.6" width="3" height="4" fill="#d0e8ed"/>
<g fill="none" stroke="#222" stroke-width="1">
 <path d="M891.4,573.6 A9,9 0 0 1 900.4,564.6"/>
 <path d="M893.6,573.6 A6.8,6.8 0 0 1 900.4,566.8"/>
 <path d="M895.8,573.6 A4.6,4.6 0 0 1 900.4,569"/>
</g>
<circle cx="899.6" cy="572.8" r="1.2" fill="#222"/>
<path d="M907.6,566.4 H910.2 L913.4,563.8 V573.4 L910.2,570.8 H907.6 Z" fill="none" stroke="#222" stroke-width="1"/>
<path d="M915.2,566.4 A3,3 0 0 1 915.2,570.8 M917,564.8 A5.4,5.4 0 0 1 917,572.4 M918.8,563.6 A7.6,7.6 0 0 1 918.8,573.6" fill="none" stroke="#222" stroke-width="1"/>
<path d="M1008,563 H1020 V571.4 H1015.6 L1014,574.4 L1012.4,571.4 H1008 Z" fill="#111"/>
<path d="M1010,565.6 H1018 M1010,567.6 H1018 M1010,569.4 H1015" stroke="#d0e8ed" stroke-width="0.9"/>
<path d="M1035.4,553 V584" stroke="#9fb4b8" stroke-width="1"/>
</svg>

<div class="t" style="left:283.20px;top:7.33px;font-size:9.88px;color:#fff;transform:scaleX(0.9021);">Presentation1  -  PowerPoint</div>
<div class="t" style="left:564.50px;top:7.33px;font-size:9.88px;color:#e9c9c0;transform:scaleX(0.9038);">Drawing Tools</div>
<div class="t" style="left:856.00px;top:7.39px;font-size:10.17px;color:#b7472a;transform:scaleX(0.8632);">Sign in</div>
<div class="t" style="left:15.50px;top:33.40px;font-size:9.45px;color:#fff;transform:scaleX(0.8780);">File</div>
<div class="t" style="left:55.70px;top:33.40px;font-size:9.45px;color:#b7472a;transform:scaleX(0.9871);">Home</div>
<div class="t" style="left:101.20px;top:33.40px;font-size:9.45px;color:#fff;transform:scaleX(0.9217);">Insert</div>
<div class="t" style="left:143.90px;top:33.40px;font-size:9.45px;color:#fff;transform:scaleX(0.9105);">Design</div>
<div class="t" style="left:192.00px;top:33.40px;font-size:9.45px;color:#fff;transform:scaleX(0.9138);">Transitions</div>
<div class="t" style="left:254.80px;top:33.40px;font-size:9.45px;color:#fff;transform:scaleX(0.9866);">Animations</div>
<div class="t" style="left:321.60px;top:33.40px;font-size:9.45px;color:#fff;transform:scaleX(0.9183);">Slide Show</div>
<div class="t" style="left:385.70px;top:33.40px;font-size:9.45px;color:#fff;transform:scaleX(0.9121);">Record</div>
<div class="t" style="left:434.40px;top:33.40px;font-size:9.45px;color:#fff;transform:scaleX(0.8969);">Review</div>
<div class="t" style="left:483.10px;top:33.40px;font-size:9.45px;color:#fff;transform:scaleX(0.9145);">View</div>
<div class="t" style="left:523.00px;top:33.40px;font-size:9.45px;color:#fff;transform:scaleX(0.9351);">Help</div>
<div class="t" style="left:563.40px;top:33.40px;font-size:9.45px;color:#fff;transform:scaleX(0.9239);">Shape Format</div>
<div class="t" style="left:661.40px;top:33.40px;font-size:9.45px;color:#fff;transform:scaleX(0.9742);">Tell me what you want to do</div>
<div class="t" style="left:998.80px;top:33.20px;font-size:9.45px;color:#fff;transform:scaleX(0.8719);">Share</div>
<div class="t" style="left:11.70px;top:81.75px;font-size:9.16px;color:#3b3b3b;transform:scaleX(0.9069);">Paste</div>
<div class="t" style="left:86.00px;top:81.55px;font-size:9.16px;color:#3b3b3b;transform:scaleX(0.9680);">New</div>
<div class="t" style="left:81.70px;top:93.65px;font-size:9.16px;color:#3b3b3b;transform:scaleX(0.9002);">Slide</div>
<div class="t" style="left:128.00px;top:56.05px;font-size:9.16px;color:#3b3b3b;transform:scaleX(0.9760);">Layout</div>
<div class="t" style="left:128.00px;top:73.45px;font-size:9.16px;color:#3b3b3b;transform:scaleX(0.8670);">Reset</div>
<div class="t" style="left:128.00px;top:90.65px;font-size:9.16px;color:#3b3b3b;transform:scaleX(0.9409);">Section</div>
<div class="t" style="left:10.90px;top:108.15px;font-size:9.16px;color:#3b3b3b;transform:scaleX(0.9755);">Clipboard</div>
<div class="t" style="left:113.80px;top:108.15px;font-size:9.16px;color:#3b3b3b;transform:scaleX(0.8833);">Slides</div>
<div class="t" style="left:185.90px;top:62.05px;font-size:9.16px;color:#444;transform:scaleX(0.9743);">Calibri (Body)</div>
<div class="t" style="left:302.90px;top:62.05px;font-size:9.16px;color:#444;transform:scaleX(0.8875);">28</div>
<div class="t" style="left:273.60px;top:108.15px;font-size:9.16px;color:#3b3b3b;transform:scaleX(0.9680);">Font</div>
<div class="t" style="left:503.60px;top:108.15px;font-size:9.16px;color:#3b3b3b;transform:scaleX(0.9269);">Paragraph</div>
<div class="t" style="left:558.60px;top:56.05px;font-size:9.16px;color:#3b3b3b;transform:scaleX(0.9761);">Text Direction</div>
<div class="t" style="left:558.60px;top:73.45px;font-size:9.16px;color:#3b3b3b;transform:scaleX(0.9901);">Align Text</div>
<div class="t" style="left:558.60px;top:90.65px;font-size:9.16px;color:#3b3b3b;transform:scaleX(0.9893);">Convert to SmartArt</div>
<div class="t" style="left:774.20px;top:81.55px;font-size:9.16px;color:#3b3b3b;transform:scaleX(0.9804);">Arrange</div>
<div class="t" style="left:814.10px;top:81.55px;font-size:9.16px;color:#3b3b3b;transform:scaleX(1.0015);">Quick</div>
<div class="t" style="left:810.00px;top:93.85px;font-size:9.16px;color:#3b3b3b;transform:scaleX(0.9079);">Styles</div>
<div class="t" style="left:773.90px;top:108.15px;font-size:9.16px;color:#3b3b3b;transform:scaleX(0.9776);">Drawing</div>
<div class="t" style="left:860.30px;top:56.05px;font-size:9.16px;color:#3b3b3b;transform:scaleX(0.9220);">Shape Fill</div>
<div class="t" style="left:860.30px;top:73.45px;font-size:9.16px;color:#3b3b3b;transform:scaleX(0.9758);">Shape Outline</div>
<div class="t" style="left:860.30px;top:90.65px;font-size:9.16px;color:#3b3b3b;transform:scaleX(0.9313);">Shape Effects</div>
<div class="t" style="left:957.70px;top:56.05px;font-size:9.16px;color:#3b3b3b;transform:scaleX(0.9623);">Find</div>
<div class="t" style="left:957.70px;top:73.45px;font-size:9.16px;color:#3b3b3b;transform:scaleX(0.9236);">Replace</div>
<div class="t" style="left:957.70px;top:90.65px;font-size:9.16px;color:#3b3b3b;transform:scaleX(0.9013);">Select</div>
<div class="t" style="left:959.30px;top:108.15px;font-size:9.16px;color:#3b3b3b;transform:scaleX(0.9943);">Editing</div>
<div class="t" style="left:9.80px;top:132.23px;font-size:11.77px;color:#444;transform:scaleX(0.6605);">1</div>
<div class="t" style="left:9.40px;top:212.16px;font-size:11.63px;color:#b7472a;transform:scaleX(0.8679);">2</div>
<div class="t" style="left:297.30px;top:171.65px;font-size:31.25px;color:#000;transform:scaleX(0.8900);-webkit-text-stroke:0.6px #fff;letter-spacing:0.645px;">Thông tin chung:</div>
<div class="t" style="left:297.60px;top:238.86px;font-size:17.30px;color:#000;transform:scaleX(1.0078);-webkit-text-stroke:0;">-</div>
<div class="t" style="left:310.40px;top:238.86px;font-size:17.30px;color:#000;transform:scaleX(1.0448);-webkit-text-stroke:0;">Tổng số lớp: 10 lớp.</div>
<div class="t" style="left:297.60px;top:267.46px;font-size:17.30px;color:#000;transform:scaleX(1.0078);-webkit-text-stroke:0;">-</div>
<div class="t" style="left:310.40px;top:267.46px;font-size:17.30px;color:#000;transform:scaleX(1.0445);-webkit-text-stroke:0;">Tổng số học sinh: 300</div>
<div class="t" style="left:6.40px;top:541.29px;font-size:8.87px;color:#444;transform:scaleX(0.9570);">Slide 2 of 2</div>
<div class="t" style="left:87.80px;top:541.29px;font-size:8.87px;color:#444;transform:scaleX(0.9626);">English (United States)</div>
<div class="t" style="left:660.80px;top:541.82px;font-size:8.72px;color:#444;transform:scaleX(0.9574);">Notes</div>
<div class="t" style="left:711.60px;top:541.82px;font-size:8.72px;color:#444;transform:scaleX(0.9562);">Comments</div>
<div class="t" style="left:998.40px;top:541.82px;font-size:8.72px;color:#444;transform:scaleX(0.8715);">72%</div>
<div class="t" style="left:927.40px;top:563.84px;font-size:10.47px;color:#111;transform:scaleX(0.7419);">ENG</div>
<div class="t" style="left:958.80px;top:557.43px;font-size:9.88px;color:#111;transform:scaleX(0.8508);">3:22 PM</div>
<div class="t" style="left:956.50px;top:570.69px;font-size:10.17px;color:#111;transform:scaleX(0.8803);">8/1/2022</div>
</body></html>
